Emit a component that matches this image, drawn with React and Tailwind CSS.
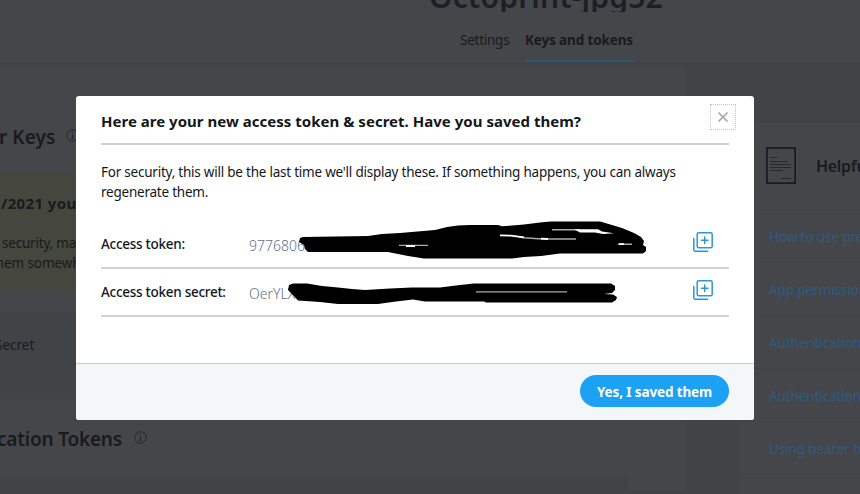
import React from "react";

function InfoIcon({ className }) {
  return (
    <svg className={className} width="13" height="13" viewBox="0 0 13 13" fill="none" stroke="#1f2427">
      <circle cx="6.5" cy="6.5" r="5.7" strokeWidth="0.9" />
      <path d="M6.5 5.6v4M6.5 3.3v1.2M5.4 9.5h2.2" strokeWidth="0.9" />
    </svg>
  );
}

function DocumentIcon() {
  return (
    <svg className="-mt-[2px] shrink-0" width="30" height="37" viewBox="0 0 30 37" fill="none" stroke="#15191c">
      <rect x="0.9" y="0.9" width="28.2" height="35.2" strokeWidth="1.6" />
      <path d="M4 10.5h7M4 14.5h18M4 17.5h21M4 20.5h21M4 23.5h13M15 31.5h10" strokeWidth="0.8" stroke="#1d2226" />
    </svg>
  );
}

function CopyIcon() {
  return (
    <svg width="20" height="20" viewBox="0 0 20 20" fill="none" stroke="#2b96d8" strokeWidth="1.5" strokeLinecap="round">
      <rect x="4.2" y="0.8" width="15" height="15" rx="1.5" />
      <path d="M11.7 5v6.6M8.4 8.3h6.6" />
      <path d="M0.8 6.5v11.2a1.5 1.5 0 0 0 1.5 1.5H14.5" />
    </svg>
  );
}

function TokenRow({ label, value }) {
  return (
    <div className="flex h-12 items-start border-b-2 border-[#ced2d5] text-[13.5px] leading-5 whitespace-nowrap">
      <span className="w-[148px] pt-[13px] font-medium tracking-[-0.27px] text-[#14171a]">{label}</span>
      <span className="pt-[15px] text-sm leading-5 font-light text-[#5f7180]">{value}</span>
      <span className="mt-[11px] mr-4 ml-auto">
        <CopyIcon />
      </span>
    </div>
  );
}

function Scribbles() {
  return (
    <svg className="absolute top-[124px] left-[211px]" width="362" height="84" viewBox="287 220 362 84">
      <path
        fill="#000"
        d="M303 237L368 236L382 234L400 233L435 230L447 227L458 225.5L470 225L498 225L502 226.3L512 225.5L524 224.5L540 222.5L551 221.5H600L612 225L622 228L634 233L641 237L644 241L643 245L646 247V251L643 253.5H560L541 256L524 257L512 258.5H424L408 256L388 252H308L305 249L304 245L299 242L300 238Z"
      />
      <path
        fill="#000"
        d="M293 283.5H307L322 286L338 287.5L352 289L365 290L390 288.5L412 287.5H440L460 285L474 283.5H611L615 286V290L612 293L604 294L613 294.5L617 297L616 300L612 302.5H486L484 301.5H425L413 299.5L396 301.5L378 304H338L320 302L298 300.5L294 296L288 290L289 285Z"
      />
      <path
        fill="none"
        stroke="#aaa"
        strokeWidth="1.4"
        d="M399 245.4h29M552 229.8h28M518 236.6l6 1.2l18 1.2h34M618 244.3h14M476 291.9h91"
      />
      <path fill="none" stroke="#fff" strokeWidth="1.8" d="M406 246.2h9M500 235.4l11 .2l13 1.8M541 238.6l7 .4M619 244.2h5" />
      <path fill="#fff" d="M574 229.2h24l4 2.2l12 1.8l-11 .8l-8-1.6h-15z" />
    </svg>
  );
}

function Modal() {
  return (
    <section className="absolute top-24 left-[76px] flex h-[324px] w-[678px] flex-col overflow-hidden rounded-[3px] bg-white">
      <div className="flex-1 px-[25px]">
        <div className="flex h-[49px] items-start justify-between border-b-2 border-[#ced2d5]">
          <h2 className="pt-[13px] text-[15px] leading-6 font-bold tracking-[0.02px] whitespace-nowrap text-[#14171a]">
            Here are your new access token &amp; secret. Have you saved them?
          </h2>
          <button className="mt-2 -mr-[7px] flex size-[26px] shrink-0 items-center justify-center border border-dotted border-[#c0c4c8]">
            <svg width="10" height="10" viewBox="0 0 10 10" stroke="#a3afb7" strokeWidth="1.7">
              <path d="M0.5 0.5l9 9M9.5 0.5l-9 9" />
            </svg>
          </button>
        </div>
        <p className="mt-[17px] h-[59px] text-[13.5px] leading-5 tracking-[-0.23px] whitespace-nowrap text-[#14171a]">
          For security, this will be the last time we'll display these. If something happens, you can always
          <br />
          regenerate them.
        </p>
        <TokenRow label="Access token:" value="9776806" />
        <TokenRow label="Access token secret:" value="OerYLX" />
      </div>
      <footer className="flex h-[57px] items-start justify-end border-t border-[#c5cdd4] bg-[#f4f7fa] pt-[11px] pr-[25px]">
        <button className="h-8 w-[149px] rounded-full bg-[#1da1f2] pt-[3px] text-[13.5px] font-bold tracking-[-0.13px] whitespace-nowrap text-white">
          Yes, I saved them
        </button>
      </footer>
      <Scribbles />
    </section>
  );
}

const links = ["How to use projects", "App permissions", "Authentication", "Authentication", "Using bearer tokens"];

export default function App() {
  return (
    <div className="relative h-[494px] w-[860px] overflow-hidden bg-[#404447] font-['Noto_Sans','Open_Sans',sans-serif] text-[#171b1e]">
      <header className="flex h-[63px] flex-col items-center border-b border-[#404447] bg-[#454649]">
        <div className="h-3 w-full overflow-hidden">
          <h1 className="-mt-[21px] ml-[429px] text-[30px] leading-9 font-semibold tracking-[0.2px] text-[#1a2125]">Octoprint-jpg52</h1>
        </div>
        <nav className="flex w-full flex-1 gap-4 pl-[460px] text-[13.5px] leading-5 whitespace-nowrap">
          <span className="w-[49px] pt-[18px] tracking-[-0.25px]">Settings</span>
          <span className="w-[108px] border-b-2 border-[#2c5878] pt-[18px] font-bold tracking-[-0.13px]">Keys and tokens</span>
        </nav>
      </header>

      <div className="flex h-[431px] gap-[55px]">
        <main className="mt-[5px] flex h-[422px] w-[685px] shrink-0 flex-col bg-[#454649]">
          <div className="flex h-[105px] shrink-0 items-start pt-[55px]">
            <h3 className="w-[66px] text-[19px] leading-7 font-semibold tracking-[0.05px] whitespace-nowrap">
              <span className="-ml-px">r Keys</span>
            </h3>
            <InfoIcon className="mt-[6px] shrink-0" />
          </div>
          <div className="h-[119px] w-[629px] shrink-0 bg-[#45463d] pt-[18px] whitespace-nowrap">
            <p className="pl-px text-[15px] leading-6 font-bold tracking-[0.4px]">/2021 you</p>
            <p className="pt-[18px] pl-[2px] text-[13.5px] leading-5 tracking-[-0.2px]">security, make</p>
            <p className="-ml-[9px] text-[13.5px] leading-5 tracking-[-0.1px]">them somewhere</p>
          </div>
          <div className="mt-5 h-[87px] w-[629px] shrink-0 bg-[#404447] pt-[23px]">
            <p className="-ml-[5px] text-[13.5px] leading-5">Secret</p>
          </div>
          <div className="flex h-[77px] shrink-0 items-start pt-[26px]">
            <h3 className="-ml-[3px] w-[137px] shrink-0 text-[19px] leading-7 font-semibold tracking-[-0.2px] whitespace-nowrap">
              cation Tokens
            </h3>
            <InfoIcon className="mt-[6px] shrink-0" />
          </div>
          <div className="h-[14px] w-[629px] shrink-0 bg-[#404447]" />
        </main>

        <aside className="mt-[60px] w-[120px] shrink-0 overflow-hidden bg-[#454649] whitespace-nowrap">
          <div className="flex h-[87px] items-center gap-5 border-b border-[#404447] pl-[26px]">
            <DocumentIcon />
            <h4 className="text-base font-semibold tracking-[-0.3px]">Helpful docs</h4>
          </div>
          {links.map((text, i) => (
            <div key={i} className="flex h-[53px] items-center border-b border-[#404447] pt-[2px] pl-[29px] text-[13.5px] tracking-[-0.1px] text-[#2c5c80]">
              {text}
            </div>
          ))}
        </aside>
      </div>

      <Modal />
    </div>
  );
}
